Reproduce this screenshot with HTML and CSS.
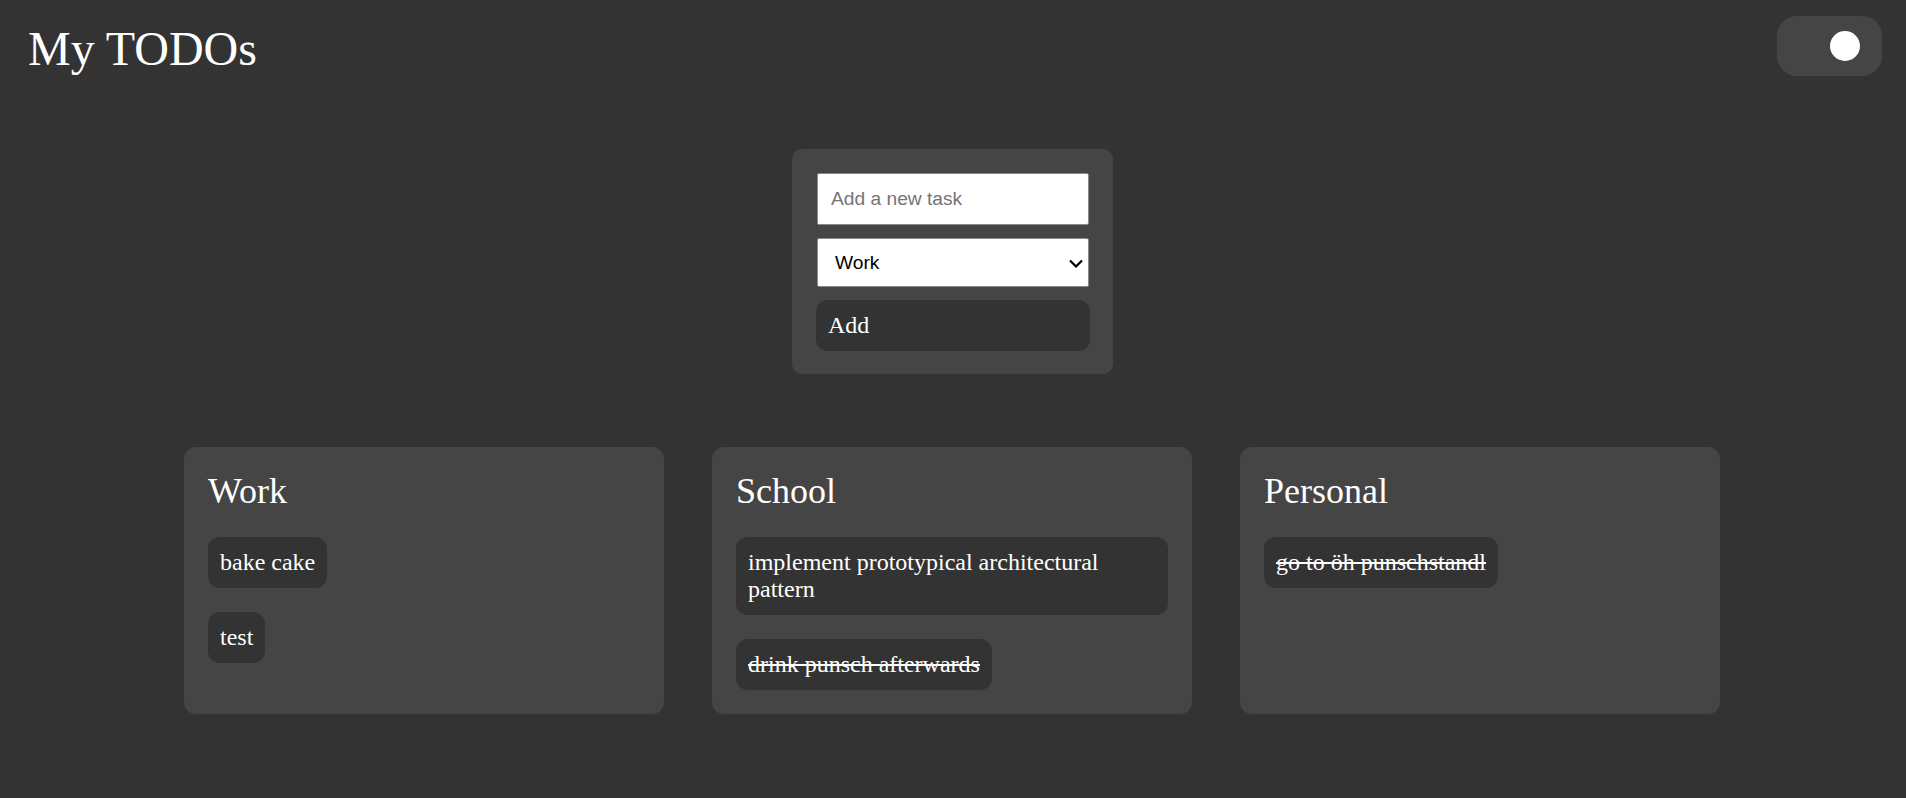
FILE: index.html
```html
<!DOCTYPE html>
<html lang="en">
<head>
<meta charset="utf-8">
<title>My TODOs</title>
<link rel="stylesheet" href="styles.css">
</head>
<body>
<header class="topbar">
  <h1 class="title">My TODOs</h1>
  <div class="toggle"><span class="knob"></span></div>
</header>
<main class="main">
  <form class="add-form">
    <input class="task-input" type="text" placeholder="Add a new task">
    <div class="select-wrap">
      <select class="cat-select">
        <option>Work</option>
        <option>School</option>
        <option>Personal</option>
      </select>
      <svg class="chevron" width="14" height="9" viewBox="0 0 14 9" aria-hidden="true"><path d="M1 1.5 L7 7.5 L13 1.5" fill="none" stroke="#000" stroke-width="2.2"/></svg>
    </div>
    <button class="add-btn" type="button">Add</button>
  </form>
  <section class="columns">
    <div class="column">
      <h2 class="col-title">Work</h2>
      <div class="tasks">
        <div class="task">bake cake</div>
        <div class="task">test</div>
      </div>
    </div>
    <div class="column">
      <h2 class="col-title">School</h2>
      <div class="tasks">
        <div class="task">implement prototypical architectural pattern</div>
        <div class="task done">drink punsch afterwards</div>
      </div>
    </div>
    <div class="column">
      <h2 class="col-title">Personal</h2>
      <div class="tasks">
        <div class="task done">go to öh punschstandl</div>
      </div>
    </div>
  </section>
</main>
</body>
</html>
```
FILE: styles.css
```css
html, body {
  margin: 0;
  padding: 0;
}
body {
  background: #333333;
  color: #ffffff;
  font-family: "Liberation Serif", "Times New Roman", serif;
  font-size: 24px;
}
.topbar {
  display: flex;
  justify-content: space-between;
  align-items: flex-start;
  height: 76px;
  box-sizing: border-box;
  padding: 16px 24px 0 28px;
}
.title {
  margin: 6px 0 0;
  font-size: 48px;
  font-weight: normal;
  line-height: 53px;
}
.toggle {
  width: 105px;
  height: 60px;
  box-sizing: border-box;
  background: #454545;
  border-radius: 20px;
  display: flex;
  align-items: center;
  justify-content: flex-end;
  padding: 0 22px;
}
.knob {
  width: 30px;
  height: 30px;
  border-radius: 50%;
  background: #ffffff;
}
.main {
  display: flex;
  flex-direction: column;
  align-items: center;
  padding-top: 73px;
}
.add-form {
  width: 321px;
  box-sizing: border-box;
  margin-right: 1px;
  background: #454545;
  border-radius: 10px;
  padding: 24px 24px 23px 25px;
  display: flex;
  flex-direction: column;
  gap: 13px;
}
.task-input {
  height: 52px;
  box-sizing: border-box;
  margin: 0;
  padding: 0 13px;
  border: 1px solid #8a8a8a;
  border-radius: 2px;
  background: #ffffff;
  color: #000;
  font-family: "Liberation Sans", Arial, sans-serif;
  font-size: 19.2px;
}
.task-input::placeholder {
  color: #757575;
}
.select-wrap {
  position: relative;
  display: flex;
}
.cat-select {
  flex: 1;
  height: 49px;
  box-sizing: border-box;
  margin: 0;
  padding: 0 30px 0 17px;
  border: 1px solid #8a8a8a;
  border-radius: 2px;
  background: #ffffff;
  color: #000;
  font-family: "Liberation Sans", Arial, sans-serif;
  font-size: 19.2px;
  appearance: none;
  -webkit-appearance: none;
}
.chevron {
  position: absolute;
  right: 6px;
  top: 21px;
  pointer-events: none;
}
.add-btn {
  height: 51px;
  margin: 0 -1px;
  padding: 0 12px;
  border: none;
  border-radius: 12px;
  background: #333333;
  color: #ffffff;
  text-align: left;
  font-family: "Liberation Serif", "Times New Roman", serif;
  font-size: 24px;
}
.columns {
  display: grid;
  grid-template-columns: repeat(3, 480px);
  gap: 48px;
  margin: 73px 2px 0 0;
}
.column {
  background: #454545;
  border-radius: 12px;
  padding: 24px;
}
.col-title {
  margin: 0 0 26px;
  font-size: 36px;
  font-weight: normal;
  line-height: 40px;
}
.tasks {
  display: flex;
  flex-direction: column;
  align-items: flex-start;
  gap: 24px;
}
.task {
  background: #333333;
  border-radius: 12px;
  padding: 12px;
  line-height: 27px;
}
.done {
  text-decoration: line-through;
}
```
